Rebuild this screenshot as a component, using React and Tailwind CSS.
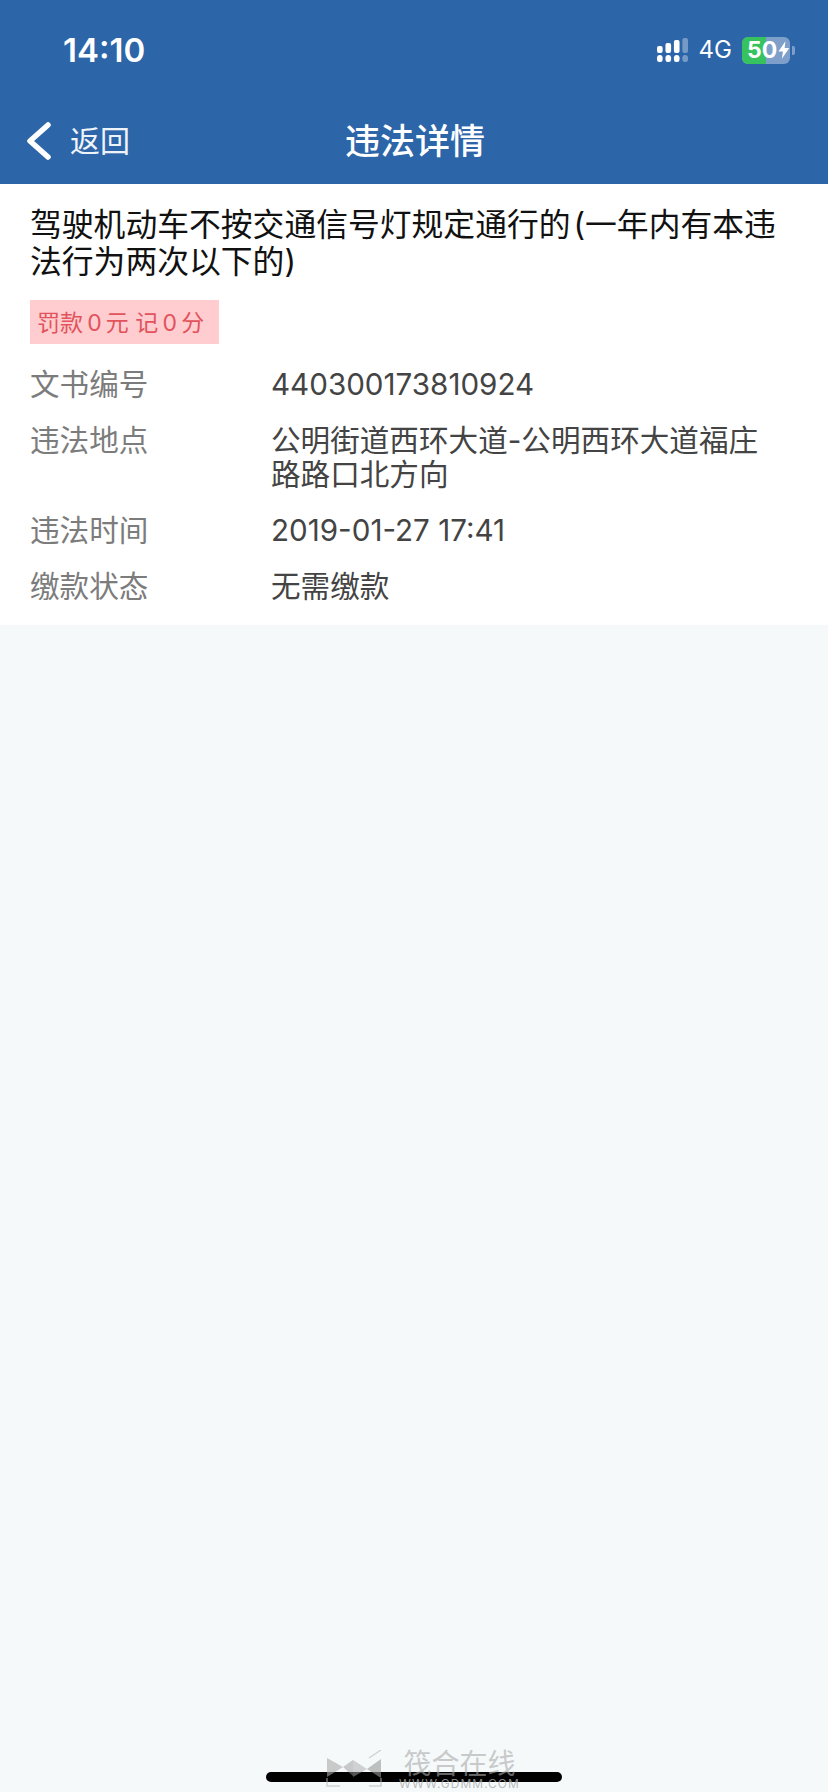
import React from 'react';

const FONT = 'font-["Inter","Noto_Sans_CJK_SC",sans-serif]';

const SignalIcon = () => (
  <svg width="31" height="24" viewBox="0 0 33 24" preserveAspectRatio="none" fill="#fff">
    <rect x="0" y="8" width="6" height="7" rx="2" />
    <rect x="9" y="5" width="6" height="10" rx="2" />
    <rect x="18" y="2" width="6" height="13" rx="2" />
    <rect x="27" y="0" width="6" height="15" rx="2" opacity="0.35" />
    <rect x="0" y="17" width="6" height="7" rx="2.5" />
    <rect x="9" y="17" width="6" height="7" rx="2.5" />
    <rect x="18" y="17" width="6" height="7" rx="2.5" />
    <rect x="27" y="17" width="6" height="7" rx="2.5" opacity="0.35" />
  </svg>
);

const BatteryIcon = () => (
  <div className="flex items-center">
    <div className="relative w-[48px] h-[27px] rounded-[6px] overflow-hidden bg-[#7f9fcb]">
      <div className="h-full w-[24px] bg-[#35c25f]"></div>
      <div className="absolute inset-0 flex items-center pl-[5px] gap-[1px]">
        <span className="text-[23px] leading-none font-bold text-white">50</span>
        <svg width="12" height="18" viewBox="0 0 12 18" fill="#fff">
          <path d="M7.5 0 L0.5 10.5 H5 L4 18 L11.5 7 H6.8 Z" />
        </svg>
      </div>
    </div>
    <div className="w-[3px] h-[9px] ml-[2px] rounded-r-[2px] bg-[#7f9fcb]"></div>
  </div>
);

const WatermarkLogo = () => (
  <svg width="60" height="40" viewBox="0 0 60 40" fill="none">
    <path d="M2 8 L18 17 L2 27 Z" fill="#aaa" opacity="0.6" />
    <path d="M18 17 L28 10 V26 Z" fill="#999" opacity="0.5" />
    <path d="M28 10 L42 19 L28 27 Z" fill="#aaa" opacity="0.5" />
    <path d="M42 19 L56 9 V28 Z" fill="#999" opacity="0.6" />
    <path d="M2 28 V36 H15 M44 36 H56 V28 M44 8 L56 0" stroke="#bbb" strokeWidth="1.5" opacity="0.6" />
  </svg>
);

const rows = [
  { label: '文书编号', value: '440300173810924' },
  { label: '违法地点', value: '公明街道西环大道-公明西环大道福庄路路口北方向' },
  { label: '违法时间', value: '2019-01-27 17:41' },
  { label: '缴款状态', value: '无需缴款' },
];

const App = () => {
  return (
    <div className={`${FONT} w-[828px] h-[1792px] bg-[#f5f9fa] flex flex-col relative overflow-hidden`}>
      <div className="bg-[#2c65a8] h-[184px] shrink-0 text-white">
        <div className="h-[100px] flex items-center justify-between pl-[63px] pr-[33px]">
          <span className="text-[33px] font-semibold leading-none">14:10</span>
          <div className="flex items-center gap-[10px]">
            <SignalIcon />
            <span className="ml-[1px] text-[24px] leading-none">4G</span>
            <BatteryIcon />
          </div>
        </div>
        <div className="h-[84px] flex items-center relative pb-[2px]">
          <svg className="ml-[26px]" width="26" height="38" viewBox="0 0 26 38" fill="none" stroke="#fff" strokeWidth="5.5" strokeLinecap="round" strokeLinejoin="round">
            <path d="M22 3 L4 19 L22 35" />
          </svg>
          <span className="ml-[18px] text-[30px] leading-none text-[#eef3f9]">返回</span>
          <span className="absolute inset-x-0 pl-[2px] text-center text-[35px] font-medium leading-none">违法详情</span>
        </div>
      </div>

      <div className="bg-white h-[441px] shrink-0 px-[30px] pt-[22px]">
        <h1 className="text-[31.8px] leading-[37px] font-normal text-[#111]">
          驾驶机动车不按交通信号灯规定通行的&#8202;(一年内有本违法行为两次以下的)
        </h1>
        <div className="mt-[20px] w-[189px] h-[44px] pl-[7px] pt-[2px] flex items-center bg-[#ffcdd0] text-[#e2535c] text-[23px] leading-none whitespace-nowrap">
          罚款&#8201;0&#8201;元 记&#8201;0&#8201;分
        </div>
        <div className="mt-[23px] flex flex-col gap-[22px]">
          {rows.map((row) => (
            <div key={row.label} className="flex text-[29.6px] leading-[34px]">
              <div className="w-[241px] shrink-0 text-[#7c7c7c]">{row.label}</div>
              <div className="flex-1 pr-[20px] text-[#444]">{row.value}</div>
            </div>
          ))}
        </div>
      </div>

      <div className="absolute bottom-[10px] left-[266px] w-[296px] h-[10px] rounded-full bg-black"></div>

      <div className="absolute left-[325px] top-[1750px] flex items-start gap-[14px]">
        <WatermarkLogo />
        <div className="flex flex-col items-center mt-[3px]">
          <span className="text-[28px] leading-[23px] text-[#aaa]/60">筏合在线</span>
          <span className="mt-[1px] text-[12px] leading-[13px] tracking-[1px] text-[#aaa]/80">WWW.GDMM.COM</span>
        </div>
      </div>
    </div>
  );
};

export default App;
